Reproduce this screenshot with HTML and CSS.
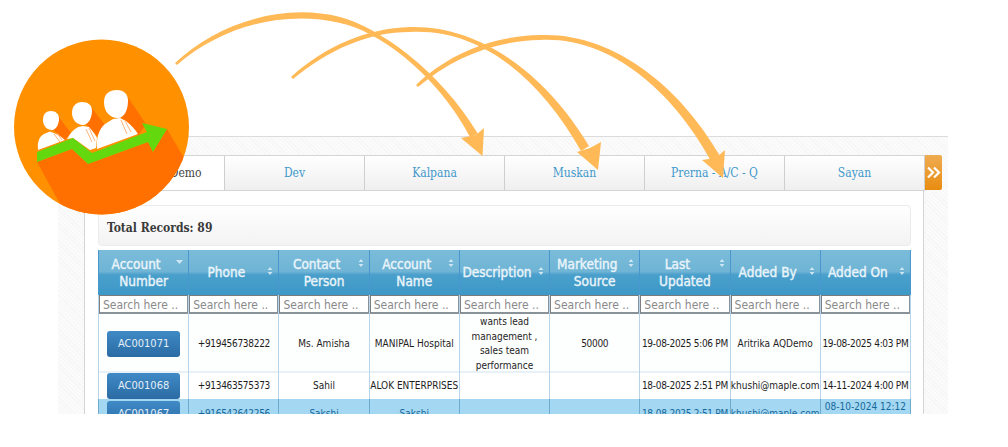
FILE: index.html
```html
<!DOCTYPE html>
<html lang="en">
<head>
<meta charset="utf-8">
<title>Accounts</title>
<link rel="stylesheet" href="styles.css">
</head>
<body>
<div class="stage">
  <section class="panel">
    <div class="content">
      <nav class="tabs">
        <div class="tab active">Aritrika AQDemo</div>
        <div class="tab">Dev</div>
        <div class="tab">Kalpana</div>
        <div class="tab">Muskan</div>
        <div class="tab">Prerna - A/C - Q</div>
        <div class="tab">Sayan</div>
        <div class="nub">
          <svg viewBox="0 0 17 35" width="17" height="35"><path class="chev" d="M3 12.500l5 5-5 5M9 12.500l5 5-5 5"/></svg>
        </div>
      </nav>
      <div class="well">Total Records: 89</div>
      <table class="grid">
        <thead>
          <tr class="heads">
            <th><svg class="sort" viewBox="0 0 8 8"><path d="M0 1h7L3.500 5z"/></svg>Account Number</th>
            <th><svg class="sort" viewBox="0 0 8 8"><path d="M4 0l2.400 3H1.600zM4 8L1.600 5h4.800z"/></svg>Phone</th>
            <th><svg class="sort" viewBox="0 0 8 8"><path d="M4 0l2.400 3H1.600zM4 8L1.600 5h4.800z"/></svg>Contact Person</th>
            <th><svg class="sort" viewBox="0 0 8 8"><path d="M4 0l2.400 3H1.600zM4 8L1.600 5h4.800z"/></svg>Account Name</th>
            <th class="tight"><svg class="sort" viewBox="0 0 8 8"><path d="M4 0l2.400 3H1.600zM4 8L1.600 5h4.800z"/></svg>Description</th>
            <th><svg class="sort" viewBox="0 0 8 8"><path d="M4 0l2.400 3H1.600zM4 8L1.600 5h4.800z"/></svg>Marketing Source</th>
            <th><svg class="sort" viewBox="0 0 8 8"><path d="M4 0l2.400 3H1.600zM4 8L1.600 5h4.800z"/></svg>Last Updated</th>
            <th><svg class="sort" viewBox="0 0 8 8"><path d="M4 0l2.400 3H1.600zM4 8L1.600 5h4.800z"/></svg>Added By</th>
            <th><svg class="sort" viewBox="0 0 8 8"><path d="M4 0l2.400 3H1.600zM4 8L1.600 5h4.800z"/></svg>Added On</th>
          </tr>
          <tr class="filters">
            <th><input placeholder="Search here .."></th>
            <th><input placeholder="Search here .."></th>
            <th><input placeholder="Search here .."></th>
            <th><input placeholder="Search here .."></th>
            <th><input placeholder="Search here .."></th>
            <th><input placeholder="Search here .."></th>
            <th><input placeholder="Search here .."></th>
            <th><input placeholder="Search here .."></th>
            <th><input placeholder="Search here .."></th>
          </tr>
        </thead>
        <tbody>
          <tr class="row-tall">
            <td><a class="acct">AC001071</a></td>
            <td class="num">+919456738222</td>
            <td>Ms. Amisha</td>
            <td>MANIPAL Hospital</td>
            <td class="wrap">wants lead management , sales team performance</td>
            <td class="num">50000</td>
            <td class="num">19-08-2025 5:06 PM</td>
            <td>Aritrika AQDemo</td>
            <td class="num">19-08-2025 4:03 PM</td>
          </tr>
          <tr class="row-short">
            <td><a class="acct">AC001068</a></td>
            <td class="num">+913463575373</td>
            <td>Sahil</td>
            <td>ALOK ENTERPRISES</td>
            <td></td>
            <td></td>
            <td class="num">18-08-2025 2:51 PM</td>
            <td>khushi@maple.com</td>
            <td class="num">14-11-2024 4:00 PM</td>
          </tr>
          <tr class="row-selected">
            <td><a class="acct">AC001067</a></td>
            <td class="num">+916542642256</td>
            <td>Sakshi</td>
            <td>Sakshi</td>
            <td></td>
            <td></td>
            <td class="num">18-08-2025 2:51 PM</td>
            <td>khushi@maple.com</td>
            <td class="wrap">08-10-2024 12:12 PM</td>
          </tr>
        </tbody>
      </table>
    </div>
  </section>

  <svg class="arrows" viewBox="0 0 1008 447" width="1008" height="447" aria-hidden="true">
    <path d="M175 63C215 25 280 2 340 17C378 27 440 70 478 134L470 137C436 72 376 30 340 23C280 9 218 29 177 65Z"/>
    <path d="M461 138L476 135L484 128L482.500 156Z"/>
    <path d="M291 77C325 46 368 28 410 27C478 25 545 72 589 146L581 151C541 80 482 28 410 32C368 32 328 50 293 79Z"/>
    <path d="M577 152L590 148L601 142L598 170Z"/>
    <path d="M416 85C448 54 492 36 540 35C612 32 680 86 720 156L711 161C670 86 606 36 540 40C494 41 452 58 418 87Z"/>
    <path d="M702 160L716 158L725 150L723 178Z"/>
  </svg>

  <svg class="logo" viewBox="0 0 190 220" width="190" height="220" aria-hidden="true">
    <defs><clipPath id="disc"><circle cx="101.500" cy="127" r="87.500"/></clipPath></defs>
    <circle class="disc" cx="101.500" cy="127" r="87.500"/>
    <g clip-path="url(#disc)" class="shade">
      <path d="M37 162L72 149L88 164L148 142L153 152L167 129L203 190L150 240L80 240Z"/>
      <path d="M127 96L146 124L138 136L116 112Z"/>
      <path d="M91 107L105 125L97 136L82 120Z"/>
      <path d="M58 116L71 133L64 141L50 126Z"/>
    </g>
    <g class="people">
      <path d="M51 111C56 111 59 114 59 119C59 124 56 130 52 130C47 130 43 126 43 120C43 114 46 111 51 111Z"/>
      <path d="M38 150C37 141 40 136 44 134L50 131.500L56 134L60 136L65 140Z"/>
      <path d="M82 102C88 102 92 105 92 111C92 118 88 125 83 125C77 125 72 120 72 113C72 106 76 102 82 102Z"/>
      <path d="M67 139C70 133 74 129 78 127L83 126L89 127C92 130 95 134 97 138L96 148L90 150L73 138Z"/>
      <path d="M117 90C124 90 128 94 128 101C128 110 124 118 118 118C110 118 104 112 104 102C104 94 109 90 117 90Z"/>
      <path d="M97 149C96 138 99 129 105 124L113 119L120 118L126 121C131 125 135 129 138 134Z"/>
    </g>
    <g class="ties">
      <path d="M54 134L60 142M57 133L62 140"/>
      <path d="M86 129L92 142M89 128L95 141"/>
      <path d="M121 120L127 134M125 121L131 132"/>
    </g>
    <path class="growth" d="M37 152L73 138L92 153L147 132L142 123L167 129L153 152L148 142L88 164L72 149L37 162Z"/>
  </svg>
</div>
</body>
</html>
```

FILE: styles.css
```css
* { box-sizing: border-box; }
html, body { margin: 0; padding: 0; background: #fff; }
.stage {
  position: relative;
  width: 1008px;
  height: 447px;
  overflow: hidden;
  padding-top: 136px;
}
.panel {
  margin: 0 60px 0 58px;
  height: 278px;
  overflow: hidden;
  border-top: 1px solid #dcdcdc;
  padding: 18px 24px 0 26px;
  background-color: #fafafa;
  background-image: repeating-linear-gradient(45deg, #f6f6f6 0 1px, #fbfbfb 1px 3px);
}
.content {
  position: relative;
  background: #fff;
  border-left: 1px solid #d4d4d4;
  border-right: 1px solid #d4d4d4;
  height: 300px;
  padding: 0 12px 0 13px;
}
.tabs {
  display: flex;
  height: 36px;
  margin: 0 -14px 0 -13px;
  border-top: 1px solid #d4d4d4;
  border-bottom: 1px solid #d4d4d4;
  font: 12px/34px "DejaVu Serif Condensed", "DejaVu Serif", serif;
  font-stretch: condensed;
  color: #3f98cc;
  background: linear-gradient(#fff, #efefef);
}
.tab {
  flex: 1 1 0;
  text-align: center;
  border-right: 1px solid #cfcfcf;
  white-space: nowrap;
}
.tab.active { color: #444; background: #fff; }
.nub {
  position: absolute;
  left: calc(100% + 2px);
  top: 0;
  width: 17px;
  height: 35px;
  background: linear-gradient(#efac52, #e98c10);
  border-radius: 0 2px 2px 0;
}
.nub svg { display: block; }
.chev { fill: none; stroke: #fff; stroke-width: 2.200; }
.well {
  margin-top: 14px;
  height: 41px;
  padding: 0 8px;
  font: bold 12px/45px "DejaVu Serif Condensed", "DejaVu Serif", serif;
  font-stretch: condensed;
  color: #3a3a3a;
  border: 1px solid #ebebeb;
  border-radius: 4px;
  background: linear-gradient(#fff, #f3f3f3);
}
.grid {
  width: 813px;
  margin-top: 4px;
  table-layout: fixed;
  border-collapse: collapse;
  font-family: "DejaVu Sans Condensed", "DejaVu Sans", sans-serif;
  font-stretch: condensed;
}
.heads th {
  height: 45px;
  padding: 0 2px;
  font-size: 13.500px;
  line-height: 17px;
  font-weight: 400;
  -webkit-text-stroke: 0.400px #e9f4fa;
  color: #e9f4fa;
  border-left: 1px solid #4a97d0;
  border-right: 1px solid #4a97d0;
  background: linear-gradient(#7abbd9 0, #6fb4d5 48%, #4a9fcb 55%, #3c98c6 100%);
  vertical-align: middle;
  text-align: center;
}
.sort {
  float: right;
  width: 8px;
  height: 8px;
  margin: 3px 2px 0 5px;
  fill: #cfe6f2;
}
.tight { padding-right: 0; }
.filters th {
  height: 19px;
  padding: 0;
  background: #fff;
  border-left: 1px solid #b7d4ea;
  border-right: 1px solid #b7d4ea;
}
.filters input {
  display: block;
  width: 100%;
  height: 19px;
  padding: 1px 3px 0;
  border-style: solid;
  border-width: 1px 1px 2px 1px;
  border-color: #7b7b7b #8a9299 #8a9299 #7f7f7f;
  font: 12px "DejaVu Sans Condensed", "DejaVu Sans", sans-serif;
  font-stretch: condensed;
  background: #fff;
  border-radius: 0;
  outline: 0;
}
.filters input::placeholder { color: #8a8a8a; opacity: 1; }
tbody td {
  padding: 0;
  font-size: 10px;
  line-height: 14.500px;
  text-align: center;
  white-space: nowrap;
  color: #1d1d1d;
  border-left: 1px solid #b7d4ea;
  border-right: 1px solid #b7d4ea;
  background: #fdfefe;
}
tbody td.num { letter-spacing: -0.300px; }
tbody td.wrap { white-space: normal; }
.row-tall td { height: 59px; padding-top: 1px; box-shadow: inset 0 -2px #e8f1f8; }
.row-short td { height: 26px; background: #fff; }
.row-selected td {
  height: 30px;
  background: #a3d7f2;
  color: #17689a;
  border-color: #6fa9cc;
}
.acct {
  display: block;
  width: 73px;
  height: 26px;
  margin: 0 auto;
  font-size: 11px;
  line-height: 26px;
  letter-spacing: 0;
  color: #e4eff7;
  border-radius: 3px;
  background: linear-gradient(#3f8ac6, #2b6ba3);
}
.arrows {
  position: absolute;
  left: 0;
  top: 0;
  fill: #ffb957;
  pointer-events: none;
}
.logo {
  position: absolute;
  left: 0;
  top: 0;
}
.disc { fill: #ff9000; }
.shade { fill: #ff7000; }
.people { fill: #fff; }
.ties { fill: none; stroke: #ffb37a; stroke-width: 1; }
.growth { fill: #64d80f; }
```
